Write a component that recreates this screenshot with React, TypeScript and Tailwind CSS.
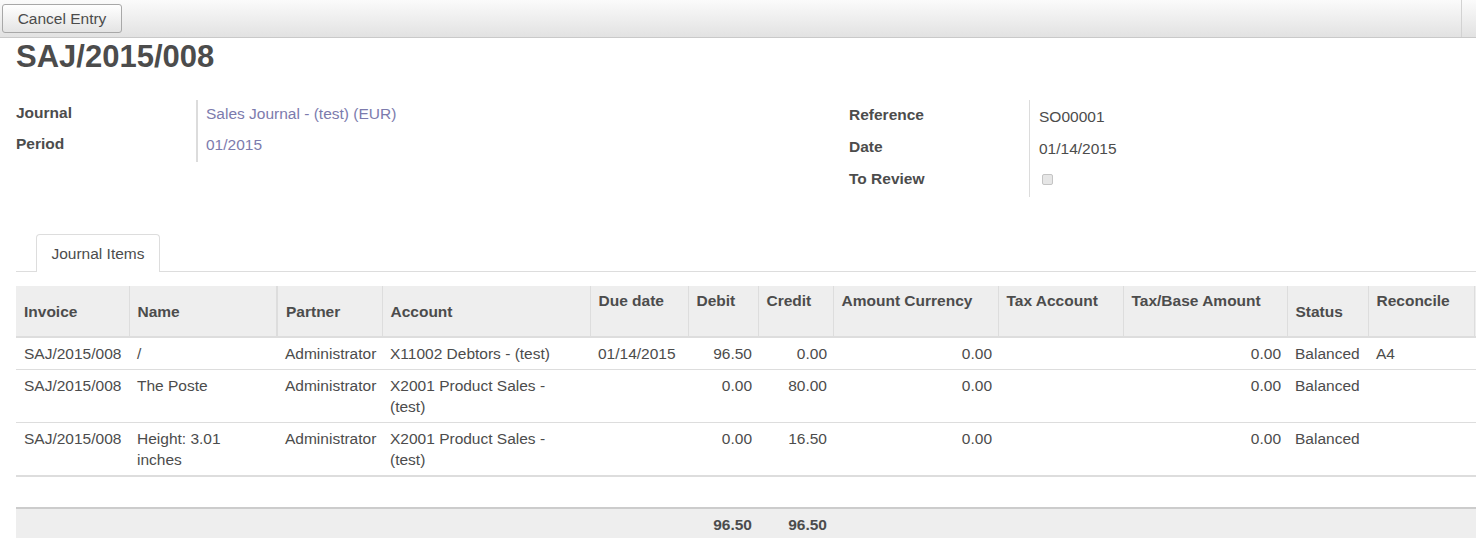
const cols = [
  { key: "invoice", label: "Invoice", w: "w-[113px]", mid: true },
  { key: "name", label: "Name", w: "w-[148px]", mid: true },
  { key: "partner", label: "Partner", w: "w-[105px]", mid: true },
  { key: "account", label: "Account", w: "w-[208px]", mid: true },
  { key: "due", label: "Due date", w: "w-[98px]" },
  { key: "debit", label: "Debit", w: "w-[70px]", num: true },
  { key: "credit", label: "Credit", w: "w-[75px]", num: true },
  { key: "amount", label: "Amount Currency", w: "w-[165px]", num: true },
  { key: "taxAccount", label: "Tax Account", w: "w-[125px]" },
  { key: "taxBase", label: "Tax/Base Amount", w: "w-[164px]", num: true },
  { key: "status", label: "Status", w: "w-[81px]", mid: true },
  { key: "reconcile", label: "Reconcile", w: "w-[106px]" },
];

type Line = Record<string, string>;

const lines: Line[] = [
  {
    invoice: "SAJ/2015/008",
    name: "/",
    partner: "Administrator",
    account: "X11002 Debtors - (test)",
    due: "01/14/2015",
    debit: "96.50",
    credit: "0.00",
    amount: "0.00",
    taxAccount: "",
    taxBase: "0.00",
    status: "Balanced",
    reconcile: "A4",
  },
  {
    invoice: "SAJ/2015/008",
    name: "The Poste",
    partner: "Administrator",
    account: "X2001 Product Sales - (test)",
    due: "",
    debit: "0.00",
    credit: "80.00",
    amount: "0.00",
    taxAccount: "",
    taxBase: "0.00",
    status: "Balanced",
    reconcile: "",
  },
  {
    invoice: "SAJ/2015/008",
    name: "Height: 3.01 inches",
    partner: "Administrator",
    account: "X2001 Product Sales - (test)",
    due: "",
    debit: "0.00",
    credit: "16.50",
    amount: "0.00",
    taxAccount: "",
    taxBase: "0.00",
    status: "Balanced",
    reconcile: "",
  },
];

const Field = ({
  label,
  children,
  h,
}: {
  label: string;
  children: React.ReactNode;
  h: string;
}) => (
  <div className={`flex ${h}`}>
    <div className="w-[180px] pt-[2px] font-bold">{label}</div>
    <div className="pl-[10px] pt-[3px]">{children}</div>
  </div>
);

export default function App() {
  return (
    <div className="w-[1476px] h-[538px] overflow-hidden bg-white font-['Liberation_Sans',Arial,sans-serif] text-[15.5px] leading-[21px] text-[#4c4c4c]">
      <div className="flex h-[38px] border-b border-[#c9c9c9] bg-linear-to-b from-[#fbfbfb] to-[#e2e2e2]">
        <div className="flex-1 pl-[2px] pt-[4px]">
          <button className="h-[29px] w-[120px] rounded-[3px] border border-[#a8a8a8] bg-linear-to-b from-white to-[#e4e4e4] text-[#4c4c4c]">
            Cancel Entry
          </button>
        </div>
        <div className="w-[15px] border-l border-[#d2d2d2]" />
      </div>

      <div className="pl-[16px]">
        <h1 className="h-[38px] text-[31px] leading-[38px] font-bold">
          SAJ/2015/008
        </h1>

        <div className="mt-[24px] flex">
          <div className="w-[833px]">
            <div className="relative">
              <div className="absolute left-[180px] top-0 h-[62px] w-[2px] bg-[#dcdcdc]" />
              <Field label="Journal" h="h-[31px]">
                <span className="text-[#7c7bad]">Sales Journal - (test) (EUR)</span>
              </Field>
              <Field label="Period" h="h-[31px]">
                <span className="text-[#7c7bad]">01/2015</span>
              </Field>
            </div>
          </div>
          <div className="relative flex-1">
            <div className="absolute left-[180px] top-0 h-[97px] w-px bg-[#dcdcdc]" />
            <div className="pt-[2px]">
              <Field label="Reference" h="h-[32px]">
                <span className="block pt-[1px]">SO00001</span>
              </Field>
              <Field label="Date" h="h-[32px]">
                <span className="block pt-[1px]">01/14/2015</span>
              </Field>
              <Field label="To Review" h="h-[32px]">
                <span className="mt-[5px] ml-[3px] block h-[11px] w-[11px] rounded-[2px] border border-[#c4c4c4] bg-[#e6e6e6]" />
              </Field>
            </div>
          </div>
        </div>

        <div className="mt-[36px] flex h-[38px] items-end border-b border-[#dddddd]">
          <div className="-mb-px ml-[20px] flex h-[38px] w-[124px] items-center justify-center rounded-t-[4px] border border-b-0 border-[#dddddd] bg-white">
            Journal Items
          </div>
        </div>

        <table className="mt-[14px] table-fixed border-collapse w-[1490px] text-left">
          <colgroup>
            {cols.map((c) => (
              <col key={c.key} className={c.w} />
            ))}
            <col className="w-[32px]" />
          </colgroup>
          <thead>
            <tr className="h-[51px] bg-[#eeeeee] border-b-2 border-[#dddddd]">
              {cols.map((c) => (
                <th
                  key={c.key}
                  className={`px-[8px] font-bold border-r border-[#dddddd] ${
                    c.mid ? "align-middle" : "align-top pt-[4px]"
                  } ${c.key === "name" ? "border-r-2" : ""}`}
                >
                  {c.label}
                </th>
              ))}
              <th className="border-l border-[#dddddd]" />
            </tr>
          </thead>
          <tbody>
            {lines.map((l, i) => (
              <tr
                key={i}
                className={`${
                  i === lines.length - 1 ? "border-b-2" : "border-b"
                } border-[#dddddd]`}
              >
                {cols.map((c) => (
                  <td
                    key={c.key}
                    className={`align-top py-[5px] ${
                      c.num ? "pl-[8px] pr-[6px] text-right" : "px-[8px]"
                    }`}
                  >
                    {l[c.key]}
                  </td>
                ))}
                <td />
              </tr>
            ))}
            <tr className="h-[32px]">
              <td colSpan={13} />
            </tr>
          </tbody>
          <tfoot>
            <tr className="h-[32px] bg-[#eeeeee] border-t-2 border-[#cccccc] font-bold">
              {cols.map((c) => (
                <td
                  key={c.key}
                  className={`pt-[5px] align-top ${
                    c.num ? "pl-[8px] pr-[6px] text-right" : "px-[8px]"
                  }`}
                >
                  {c.key === "debit" || c.key === "credit" ? "96.50" : ""}
                </td>
              ))}
              <td />
            </tr>
          </tfoot>
        </table>
      </div>
    </div>
  );
}
